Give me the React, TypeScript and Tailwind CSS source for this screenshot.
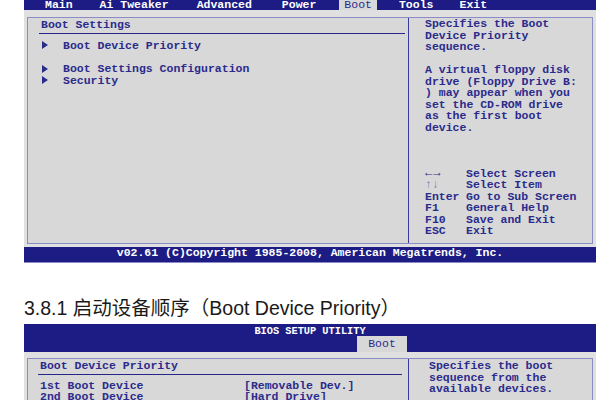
import React from 'react';

const MONO = "font-['Liberation_Mono','Courier_New',monospace]";
const INK = 'text-[#2b2b8c]';

const Arrow = () => (
  <svg width="6" height="8" viewBox="0 0 6 8" className="shrink-0">
    <path d="M0 0 L6 4 L0 8 Z" fill="#2b2b8c" />
  </svg>
);

const helpLines = [
  'Specifies the Boot',
  'Device Priority',
  'sequence.',
  '',
  'A virtual floppy disk',
  'drive (Floppy Drive B:',
  ') may appear when you',
  'set the CD-ROM drive',
  'as the first boot',
  'device.',
  '',
  '',
  '',
];

const keys: [string, string][] = [
  ['←→', 'Select Screen'],
  ['↑↓', 'Select Item'],
  ['Enter', 'Go to Sub Screen'],
  ['F1', 'General Help'],
  ['F10', 'Save and Exit'],
  ['ESC', 'Exit'],
];

const BootSettingsScreen: React.FC = () => (
  <div className={`ml-[24px] w-[572px] ${MONO} text-[11.5px] leading-[11.5px]`}>
    {/* Tab bar */}
    <div className="h-[10px] bg-[#1c1c84] flex font-bold text-white leading-[10px]">
      <span className="ml-[21px]">Main</span>
      <span className="ml-[27px]">Ai Tweaker</span>
      <span className="ml-[28px]">Advanced</span>
      <span className="ml-[30px]">Power</span>
      <span className={`ml-[23px] px-[5px] bg-[#d8d8d8] font-normal ${INK}`}>Boot</span>
      <span className="ml-[22px]">Tools</span>
      <span className="ml-[26px]">Exit</span>
    </div>

    {/* Body */}
    <div className="bg-[#e0e0e0] px-[3px] pt-[7px] pb-[3px]">
      <div className={`flex h-[227px] border border-[#8b8bc5] bg-[#d8d8d8] font-bold ${INK}`}>
        <div className="w-[380px]">
          <div className="ml-[11px] mr-[3px] pt-[1px] pb-[2px] border-b border-[#26268a]">
            <span className="pl-[2px]">Boot Settings</span>
          </div>
          <div className="ml-[14px] mt-[6px] flex items-center gap-[15px]">
            <Arrow />
            <span>Boot Device Priority</span>
          </div>
          <div className="ml-[14px] mt-[12px] flex items-center gap-[15px]">
            <Arrow />
            <span>Boot Settings Configuration</span>
          </div>
          <div className="ml-[14px] flex items-center gap-[15px]">
            <Arrow />
            <span>Security</span>
          </div>
        </div>
        <div className="flex-1 border-l border-[#3a3a9a] pl-[16px]">
          {helpLines.map((line, i) => (
            <div key={i} className="h-[11.5px] whitespace-pre">
              {line}
            </div>
          ))}
          {keys.map(([k, d]) => (
            <div key={k} className="flex h-[11.5px]">
              <span
                className={`w-[41px] shrink-0 ${
                  k === '↑↓' ? 'text-[#7a7ab8] font-normal' : ''
                } ${k === '←→' ? 'font-normal text-[12px] leading-[11.5px] tracking-[1px]' : ''}`}
              >
                {k}
              </span>
              <span>{d}</span>
            </div>
          ))}
        </div>
      </div>
    </div>

    {/* Footer */}
    <div className="h-[16px] bg-[#1c1c84] text-center text-white font-bold leading-[12px] border-b border-[#8b8bc5]">
      v02.61 (C)Copyright 1985-2008, American Megatrends, Inc.
    </div>
  </div>
);

const BootPriorityScreen: React.FC = () => (
  <div className={`ml-[24px] w-[572px] ${MONO} text-[11.5px] leading-[11.5px]`}>
    <div className="h-[28px] bg-[#1c1c84] flex flex-col">
      <div className="pt-[2px] h-[12px] text-center text-white font-bold text-[10.3px] leading-[10px]">
        BIOS SETUP UTILITY
      </div>
      <div className={`ml-[333px] w-[50px] h-[16px] bg-[#d8d8d8] text-center leading-[16px] ${INK}`}>
        Boot
      </div>
    </div>
    <div className="bg-[#e0e0e0] px-[3px] pt-[6px]">
      <div className={`flex h-[200px] border border-[#8b8bc5] bg-[#d8d8d8] font-bold ${INK}`}>
        <div className="w-[380px]">
          <div className="ml-[10px] mr-[6px] pt-[1px] pb-[2px] border-b border-[#26268a]">
            <span className="pl-[2px]">Boot Device Priority</span>
          </div>
          <div className="mt-[5px] ml-[12px]">
            <div className="flex h-[11.5px]">
              <span className="w-[204px]">1st Boot Device</span>
              <span>[Removable Dev.]</span>
            </div>
            <div className="flex h-[11.5px]">
              <span className="w-[204px]">2nd Boot Device</span>
              <span>[Hard Drive]</span>
            </div>
          </div>
        </div>
        <div className="flex-1 border-l border-[#3a3a9a] pl-[20px] pt-[1px]">
          <div>Specifies the boot</div>
          <div>sequence from the</div>
          <div>available devices.</div>
        </div>
      </div>
    </div>
  </div>
);

export default function App() {
  return (
    <div className="w-[600px] h-[400px] overflow-hidden bg-white">
      <BootSettingsScreen />
      <h2 className="mt-[33px] pl-[24px] text-[19.5px] leading-[24px] font-normal text-[#1a1a1a] font-['Liberation_Sans','Noto_Sans_CJK_SC',sans-serif]">
        3.8.1 启动设备顺序（Boot Device Priority）
      </h2>
      <div className="mt-[4px]">
        <BootPriorityScreen />
      </div>
    </div>
  );
}
